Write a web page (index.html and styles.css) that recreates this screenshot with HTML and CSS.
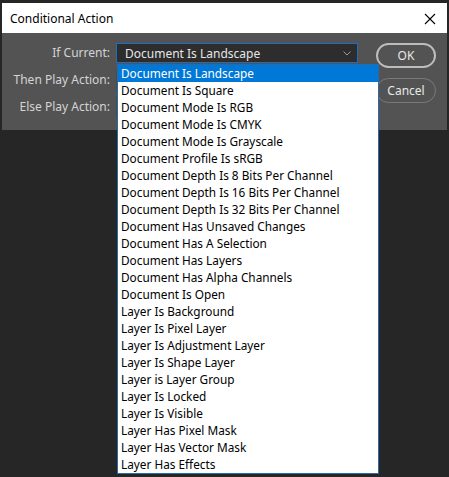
FILE: index.html
```html
<!DOCTYPE html>
<html>
<head>
<meta charset="utf-8">
<link rel="stylesheet" href="styles.css">
</head>
<body>
<div class="window">
  <div class="titlebar">
    <span class="title">Conditional Action</span>
    <svg class="close" width="12" height="12" viewBox="0 0 12 12"><path d="M1 1 L11 11 M11 1 L1 11" stroke="#000" stroke-width="1.1" fill="none"/></svg>
  </div>
  <div class="dialog">
    <div class="form">
      <label class="lbl">If Current:</label>
      <div class="select active"><span>Document Is Landscape</span>
        <svg class="chev" width="8" height="5" viewBox="0 0 8 5"><path d="M0.5 0.5 L4 4 L7.5 0.5" stroke="#9a9a9a" stroke-width="1" fill="none"/></svg>
      </div>
      <label class="lbl">Then Play Action:</label>
      <div class="select"><span></span></div>
      <label class="lbl">Else Play Action:</label>
      <div class="select"><span></span></div>
    </div>
    <div class="buttons">
      <button class="btn primary">OK</button>
      <button class="btn">Cancel</button>
    </div>
  </div>
  <ul class="list">
    <li class="sel">Document Is Landscape</li>
    <li>Document Is Square</li>
    <li>Document Mode Is RGB</li>
    <li>Document Mode Is CMYK</li>
    <li>Document Mode Is Grayscale</li>
    <li>Document Profile Is sRGB</li>
    <li>Document Depth Is 8 Bits Per Channel</li>
    <li>Document Depth Is 16 Bits Per Channel</li>
    <li>Document Depth Is 32 Bits Per Channel</li>
    <li>Document Has Unsaved Changes</li>
    <li>Document Has A Selection</li>
    <li>Document Has Layers</li>
    <li>Document Has Alpha Channels</li>
    <li>Document Is Open</li>
    <li>Layer Is Background</li>
    <li>Layer Is Pixel Layer</li>
    <li>Layer Is Adjustment Layer</li>
    <li>Layer Is Shape Layer</li>
    <li>Layer is Layer Group</li>
    <li>Layer Is Locked</li>
    <li>Layer Is Visible</li>
    <li>Layer Has Pixel Mask</li>
    <li>Layer Has Vector Mask</li>
    <li>Layer Has Effects</li>
  </ul>
</div>
</body>
</html>
```
FILE: styles.css
```css
html, body {
  margin: 0;
  padding: 0;
  background: #262626;
  width: 449px;
  height: 477px;
  overflow: hidden;
  font-family: "Noto Sans", "Open Sans", sans-serif;
}
.window {
  position: relative;
  margin: 3px 2px 0 2px;
  width: 445px;
}
.titlebar {
  height: 30px;
  background: #ffffff;
  display: flex;
  align-items: center;
  justify-content: space-between;
  padding: 0 11px 0 8px;
}
.title {
  font-size: 12px;
  color: #000;
}
.close { display: block; margin-top: 1px; }
.dialog {
  background: #535353;
  height: 87px;
  padding-top: 10px;
  display: flex;
  align-items: flex-start;
}
.form {
  display: grid;
  grid-template-columns: 108px 242px;
  column-gap: 6px;
  row-gap: 7px;
  grid-auto-rows: 20px;
}
.lbl {
  font-size: 12px;
  color: #d4d4d4;
  text-align: right;
  line-height: 20px;
}
.select {
  box-sizing: border-box;
  height: 20px;
  background: #2d2d2d;
  border: 1px solid #4a4a4a;
  display: flex;
  align-items: center;
  justify-content: space-between;
  padding: 0 6px 0 8px;
  font-size: 12px;
  color: #e6e6e6;
}
.select.active { border-color: #1c6fc0; }
.chev { display: block; }
.buttons {
  margin-left: 18px;
  display: flex;
  flex-direction: column;
  gap: 10px;
}
.btn {
  width: 60px;
  height: 25px;
  box-sizing: border-box;
  border-radius: 13px;
  border: 1px solid #7a7a7a;
  background: #535353;
  color: #e8e8e8;
  font-family: inherit;
  font-size: 12px;
  padding: 0;
}
.btn.primary { border: 2px solid #bdbdbd; }
.list {
  position: absolute;
  left: 115px;
  top: 61px;
  width: 260px;
  margin: 0;
  padding: 0;
  list-style: none;
  background: #ffffff;
  border: 1px solid #2a6aa6;
}
.list li {
  height: 17px;
  line-height: 17px;
  font-size: 11.8px;
  color: #000;
  padding-left: 3px;
  white-space: nowrap;
}
.list li.sel {
  background: #0078d7;
  color: #ffffff;
}
```
